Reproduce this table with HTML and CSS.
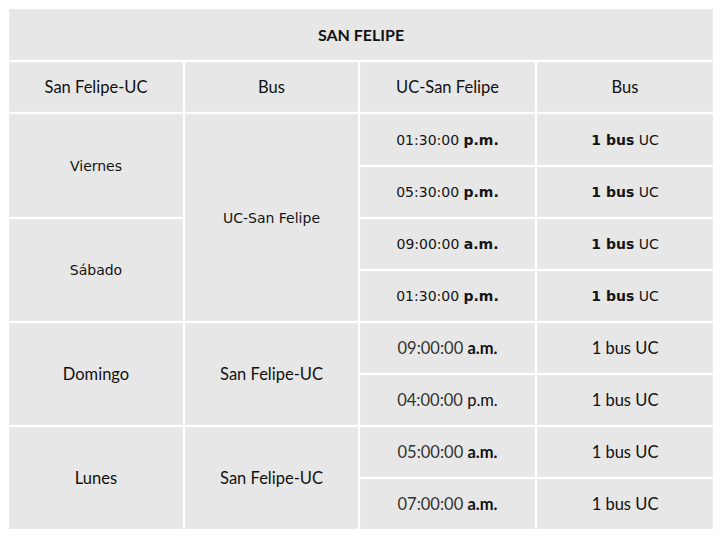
FILE: index.html
```html
<!DOCTYPE html>
<html lang="es">
<head>
<meta charset="utf-8">
<title>San Felipe</title>
<link rel="stylesheet" href="styles.css">
</head>
<body>
<table class="horario">
  <colgroup>
    <col class="c1"><col class="c2"><col class="c3"><col class="c4">
  </colgroup>
  <tr><td class="titulo" colspan="4">SAN FELIPE</td></tr>
  <tr><td>San Felipe-UC</td><td>Bus</td><td>UC-San Felipe</td><td>Bus</td></tr>
  <tr class="alta"><td class="v" rowspan="2">Viernes</td><td class="v" rowspan="4">UC-San Felipe</td><td class="v">01:30:00 <b>p.m.</b></td><td class="v"><b>1 bus</b> UC</td></tr>
  <tr><td class="v">05:30:00 <b>p.m.</b></td><td class="v"><b>1 bus</b> UC</td></tr>
  <tr><td class="v" rowspan="2">Sábado</td><td class="v">09:00:00 <b>a.m.</b></td><td class="v"><b>1 bus</b> UC</td></tr>
  <tr><td class="v">01:30:00 <b>p.m.</b></td><td class="v"><b>1 bus</b> UC</td></tr>
  <tr><td rowspan="2">Domingo</td><td rowspan="2">San Felipe-UC</td><td><span class="hr">09:00:00</span> <b>a.m.</b></td><td>1 bus UC</td></tr>
  <tr><td><span class="hr">04:00:00</span> p.m.</td><td>1 bus UC</td></tr>
  <tr><td rowspan="2">Lunes</td><td rowspan="2">San Felipe-UC</td><td><span class="hr">05:00:00</span> <b>a.m.</b></td><td>1 bus UC</td></tr>
  <tr><td><span class="hr">07:00:00</span> <b>a.m.</b></td><td>1 bus UC</td></tr>
</table>
</body>
</html>
```
FILE: styles.css
```css
html, body {
  margin: 0;
  background: #ffffff;
}
body {
  padding: 7px 0 0 7px;
}
.horario {
  border-collapse: separate;
  border-spacing: 2px;
  table-layout: fixed;
  width: 708px;
  font-family: Lato, "Liberation Sans", sans-serif;
  font-size: 16.5px;
  color: #111111;
}
.c1 { width: 174px; }
.c2 { width: 173px; }
.c3 { width: 175px; }
.c4 { width: 176px; }
.horario td {
  background: #e7e7e7;
  height: 50px;
  padding: 0;
  text-align: center;
  vertical-align: middle;
  box-sizing: border-box;
  border: 1px solid #ebebeb;
}
.horario tr.alta td {
  height: 51px;
}
.horario td.titulo {
  font-weight: 700;
  font-size: 16px;
  height: 51px;
}
.horario td.v {
  font-family: "DejaVu Sans", Verdana, sans-serif;
  font-size: 14px;
  color: #141414;
}
.hr {
  color: #333333;
}
b {
  font-weight: 700;
}
```
